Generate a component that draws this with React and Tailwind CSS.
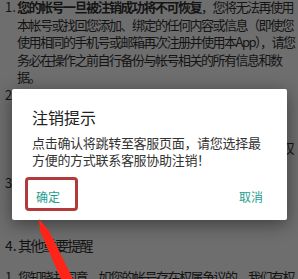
import React from 'react';

const bgLines = [
  { num: '1.', text: [
    <>
      <span className="font-bold">您的帐号一旦被注销成功将不可恢复</span>，您将无法再使用
    </>,
    '本帐号或找回您添加、绑定的任何内容或信息（即使您',
    '使用相同的手机号或邮箱再次注册并使用本App），请您',
    '务必在操作之前自行备份与帐号相关的所有信息和数',
    '据。',
  ] },
  { num: '2.', text: [
    '在注销帐号前，请您确认已妥善处理帐号内的资产与',
    '权益，包括但不限于余额、积分、优惠券等，',
    '注销后将视为您自愿放弃，',
    '如您对上述内容存在疑问，可在注销前联系客服咨询权',
    '益。',
  ] },
  { num: '3.', text: ['帐号注销后不可撤回，', '请谨慎操作。'] },
];

function Item({ num, text }) {
  return (
    <div className="flex">
      <span className="w-[12px] shrink-0 tracking-normal">{num}</span>
      <div className="flex flex-col">
        {text.map((line, i) => (
          <div key={i} className="whitespace-nowrap">
            {line}
          </div>
        ))}
      </div>
    </div>
  );
}

export default function App() {
  return (
    <div className="relative w-[298px] h-[279px] overflow-hidden bg-[#6e6e6e] font-['Noto_Sans_CJK_SC',sans-serif] text-[#141414]">
      {/* page text behind the dialog */}
      <div className="pl-[5px] -mt-[2px] text-[13px] leading-[17.6px] tracking-[-1.5px]">
        {bgLines.map((item) => (
          <Item key={item.num} num={item.num} text={item.text} />
        ))}

        <div className="flex mt-[26px] text-[14px] leading-[20px] tracking-[-1.7px]">
          <span className="w-[13px] shrink-0 tracking-normal">4.</span>
          <span>其他重要提醒</span>
        </div>

        <div className="flex mt-[13px]">
          <span className="w-[13px] shrink-0 tracking-normal">1.</span>
          <span className="whitespace-nowrap">
            您知晓并同意，如您的帐号存在权属争议的，我们有权
          </span>
        </div>
      </div>

      {/* dialog */}
      <div className="absolute left-[12px] top-[89px] w-[275px] h-[131px] bg-white rounded-[2px] shadow-[0_4px_18px_rgba(0,0,0,0.45)]">
        <div className="pt-[18px] px-[20px]">
          <h2 className="text-[16px] leading-[20px] text-[#212121]">注销提示</h2>
          <p className="mt-[7px] text-[13px] leading-[17px] tracking-[-0.3px] text-[#333333]">
            点击确认将跳转至客服页面，请您选择最
            <br />
            方便的方式联系客服协助注销！
          </p>
        </div>
        <div className="flex justify-between px-[24px] mt-[21px] text-[12px] leading-[16px] text-[#1f9e8e]">
          <button>确定</button>
          <button>取消</button>
        </div>
        {/* red highlight box */}
        <div className="absolute left-[13px] top-[88px] w-[53px] h-[34px] border-[3px] border-[#b23a3a] rounded-[4px]" />
      </div>

      {/* red arrow */}
      <svg className="absolute left-0 top-0 pointer-events-none" width="298" height="279" viewBox="0 0 298 279">
        <polygon points="39,219 49,231 73,279 61,279 40,231" fill="#ff2418" />
      </svg>
    </div>
  );
}
